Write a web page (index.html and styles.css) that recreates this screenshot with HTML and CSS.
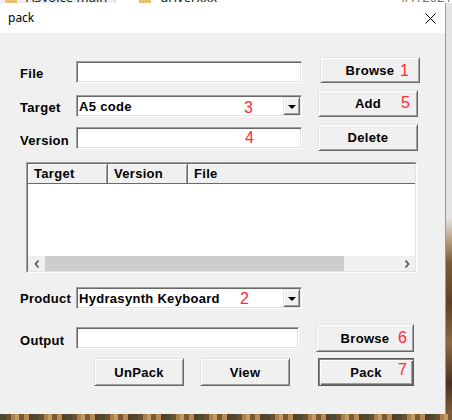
FILE: index.html
```html
<!DOCTYPE html>
<html>
<head>
<meta charset="utf-8">
<title>pack</title>
<link rel="stylesheet" href="styles.css">
</head>
<body>
<div class="screen">
  <div class="desk-top">
    <div class="dt-inner">
      <span class="dt-cell dt-left"><i class="folder"></i>A5voice main</span>
      <span class="dt-cell dt-mid"><i class="folder"></i>driverxxx</span>
      <span class="dt-date">4/7/2021</span>
    </div>
  </div>
  <div class="main">
    <div class="window">
      <div class="titlebar">
        <span class="title">pack</span>
        <svg class="close" width="11" height="11" viewBox="0 0 11 11"><path d="M0.5 0.5 L10.5 10.5 M10.5 0.5 L0.5 10.5" stroke="#000" stroke-width="1" fill="none"/></svg>
      </div>
      <div class="content">
        <div class="row r1">
          <span class="label l1">File</span>
          <div class="field f1"></div>
          <div class="btn b1">Browse</div>
        </div>
        <div class="row r2">
          <span class="label l2">Target</span>
          <div class="field combo c1"><span class="ctext">A5 code</span><span class="drop"><i class="tri"></i></span></div>
          <div class="btn b2">Add</div>
        </div>
        <div class="row r3">
          <span class="label l3">Version</span>
          <div class="field f3"></div>
          <div class="btn b2">Delete</div>
        </div>
        <div class="list">
          <div class="list-inner">
            <div class="lv-head">
              <span class="col col-t">Target</span>
              <span class="col col-v">Version</span>
              <span class="col col-f">File</span>
            </div>
            <div class="lv-body"></div>
            <div class="sbar">
              <span class="sb-btn"><svg width="6" height="8" viewBox="0 0 6 8"><path d="M4.5 0.5 L1.5 4 L4.5 7.5" stroke="#505050" stroke-width="1.6" fill="none"/></svg></span>
              <span class="sb-thumb"></span>
              <span class="sb-track"></span>
              <span class="sb-btn"><svg width="6" height="8" viewBox="0 0 6 8"><path d="M1.5 0.5 L4.5 4 L1.5 7.5" stroke="#505050" stroke-width="1.6" fill="none"/></svg></span>
            </div>
          </div>
        </div>
        <div class="row r4">
          <span class="label l4">Product</span>
          <div class="field combo"><span class="ctext">Hydrasynth Keyboard</span><span class="drop"><i class="tri"></i></span></div>
        </div>
        <div class="row r5">
          <span class="label l5">Output</span>
          <div class="field f5"></div>
          <div class="btn b5">Browse</div>
        </div>
        <div class="row r6">
          <div class="btn b6">UnPack</div>
          <div class="btn b7">View</div>
          <div class="btn b8 default">Pack</div>
        </div>
        <span class="num n1">1</span>
        <span class="num n5">5</span>
        <span class="num n3">3</span>
        <span class="num n4">4</span>
        <span class="num n2">2</span>
        <span class="num n6">6</span>
        <span class="num n7">7</span>
      </div>
    </div>
    <div class="desk-right"></div>
  </div>
  <div class="desk-bottom"></div>
</div>
</body>
</html>
```

FILE: styles.css
```css
html, body {
  margin: 0;
  padding: 0;
}
body {
  width: 452px;
  height: 420px;
  overflow: hidden;
  font-family: "Liberation Sans", Arial, sans-serif;
  color: #000;
}
.screen {
  width: 452px;
  height: 420px;
  display: flex;
  flex-direction: column;
  background: #e8e8e8;
}

/* desktop fragments */
.desk-top {
  height: 3px;
  overflow: hidden;
  background: #fff;
}
.dt-inner {
  display: flex;
  align-items: flex-end;
  height: 14px;
  margin-top: -10px;
  font-family: "Noto Sans", sans-serif;
  font-size: 13px;
  line-height: 14px;
  color: #222;
}
.dt-cell {
  display: flex;
  align-items: flex-end;
  gap: 9px;
}
.dt-left {
  width: 123px;
  padding-left: 5px;
  background: #eeeeee;
  border-right: 1px solid #dcdcdc;
}
.dt-mid {
  width: 230px;
  padding-left: 23px;
}
.dt-date {
  margin-left: 52px;
  color: #777;
}
.folder {
  display: block;
  width: 12px;
  height: 14px;
  background: #e8c170;
}
.main {
  display: flex;
  height: 411px;
}
.window {
  width: 445px;
  border-right: 1px solid #9a9a9a;
  display: flex;
  flex-direction: column;
}
.desk-right {
  flex: 1;
  background: linear-gradient(to bottom, #e4e4e4 0, #e4e4e4 215px, #bba68a 235px, #7b5a36 260px, #5d4126 300px, #8c6a42 340px, #4a3220 380px, #7d5c38 411px);
}
.desk-bottom {
  height: 6px;
  background: repeating-linear-gradient(90deg, #4d4a30 0 6px, #6b5030 6px 11px, #a88050 11px 15px, #c49a62 15px 19px, #7a5832 19px 24px, #b58b55 24px 29px, #5a3e24 29px 33px);
}

/* title bar */
.titlebar {
  height: 30px;
  background: #fff;
  display: flex;
  align-items: center;
  justify-content: space-between;
  padding: 0 9px 0 8px;
}
.title {
  font-family: "Noto Sans", sans-serif;
  font-size: 12px;
  line-height: 16px;
}
.close {
  display: block;
  margin-top: 1px;
}

/* dialog body */
.content {
  flex: 1;
  position: relative;
  background: #f0f0f0;
  padding: 24px 0 0 20px;
}
.row {
  display: flex;
  align-items: flex-start;
}
.label {
  flex-shrink: 0;
  width: 56px;
  font-size: 13px;
  line-height: 15px;
  font-weight: bold;
  letter-spacing: 0.3px;
}
.field {
  flex-shrink: 0;
  box-sizing: border-box;
  width: 226px;
  height: 22px;
  background: #fff;
  border: 1px solid;
  border-color: #a0a0a0 #fff #fff #a0a0a0;
  box-shadow: inset 1px 1px 0 #696969, inset -1px -1px 0 #e3e3e3;
}
.combo {
  display: flex;
  align-items: center;
  padding-left: 2px;
}
.ctext {
  font-size: 13px;
  font-weight: bold;
  line-height: 15px;
  letter-spacing: 0.3px;
}
.drop {
  margin: 1px 1px 1px auto;
  box-sizing: border-box;
  width: 17px;
  height: 18px;
  background: #f0f0f0;
  border: 1px solid;
  border-color: #e3e3e3 #696969 #696969 #e3e3e3;
  box-shadow: inset 1px 1px 0 #fff, inset -1px -1px 0 #a0a0a0;
  display: flex;
  align-items: center;
  justify-content: center;
}
.tri {
  display: block;
  width: 0;
  height: 0;
  border-left: 4px solid transparent;
  border-right: 4px solid transparent;
  border-top: 4px solid #000;
  margin-top: 1px;
}
.btn {
  flex-shrink: 0;
  box-sizing: border-box;
  background: #f0f0f0;
  border: 1px solid;
  border-color: #e3e3e3 #696969 #696969 #e3e3e3;
  box-shadow: inset 1px 1px 0 #fff, inset -1px -1px 0 #a0a0a0;
  display: flex;
  align-items: center;
  justify-content: center;
  font-size: 13px;
  font-weight: bold;
  line-height: 15px;
  letter-spacing: 0.3px;
}
.btn.default {
  border-color: #5a5a5a;
  box-shadow: inset 1px 1px 0 #8a8a8a, inset 2px 2px 0 #fff, inset -1px -1px 0 #696969, inset -2px -2px 0 #a0a0a0;
}

.l1 { margin-top: 9px; }
.f1 { margin-top: 4px; }
.b1 { margin-left: 18px; width: 100px; height: 26px; }

.r2 { margin-top: 7px; }
.l2 { margin-top: 10px; }
.c1 { margin-top: 5px; }
.b2 { margin-left: 16px; width: 100px; height: 27px; }

.r3 { margin-top: 7px; }
.l3 { margin-top: 9px; }
.f3 { margin-top: 3px; }

/* list view */
.list {
  margin: 11px 0 0 6px;
  width: 391px;
  height: 111px;
  box-sizing: border-box;
  border: 1px solid;
  border-color: #a0a0a0 #fff #fff #a0a0a0;
}
.list-inner {
  height: 100%;
  box-sizing: border-box;
  border: 1px solid;
  border-color: #696969 #e3e3e3 #e3e3e3 #696969;
  display: flex;
  flex-direction: column;
  background: #fff;
}
.lv-head {
  display: flex;
  height: 20px;
  flex-shrink: 0;
  box-sizing: border-box;
  background: #f0f0f0;
  border-bottom: 1px solid #696969;
  box-shadow: inset 0 1px 0 #fff;
}
.col {
  box-sizing: border-box;
  height: 19px;
  padding-left: 6px;
  font-size: 13px;
  font-weight: bold;
  line-height: 19px;
  letter-spacing: 0.3px;
}
.col-t, .col-v {
  width: 80px;
  border-right: 1px solid #696969;
  box-shadow: inset 1px 1px 0 #fff, inset -1px 0 0 #a0a0a0;
}
.col-f {
  flex: 1;
  box-shadow: inset 1px 1px 0 #fff;
}
.lv-body {
  flex: 1;
}
.sbar {
  display: flex;
  height: 15px;
  flex-shrink: 0;
  background: #f0f0f0;
}
.sb-btn {
  width: 17px;
  display: flex;
  align-items: center;
  justify-content: center;
}
.sb-thumb {
  width: 299px;
  background: #cdcdcd;
}
.sb-track {
  flex: 1;
}

.r4 { margin-top: 14px; }
.l4 { margin-top: 4px; }

.r5 { margin-top: 15px; }
.l5 { margin-top: 9px; }
.f5 { margin-top: 3px; width: 223px; }
.b5 { margin-left: 17px; width: 98px; height: 28px; }

.r6 { margin-top: 6px; }
.b6 { margin-left: 74px; width: 90px; height: 28px; }
.b7 { margin-left: 16px; width: 90px; height: 28px; }
.b8 { margin-left: 28px; width: 96px; height: 28px; }

/* red annotation numbers */
.num {
  position: absolute;
  font-family: "Liberation Sans", Arial, sans-serif;
  font-size: 16px;
  line-height: 16px;
  color: #ff2a35;
}
.n1 { left: 400px; top: 30px; }
.n5 { left: 401px; top: 62px; }
.n3 { left: 244px; top: 67px; }
.n4 { left: 245px; top: 97px; }
.n2 { left: 240px; top: 258px; }
.n6 { left: 398px; top: 297px; }
.n7 { left: 398px; top: 329px; }
```
